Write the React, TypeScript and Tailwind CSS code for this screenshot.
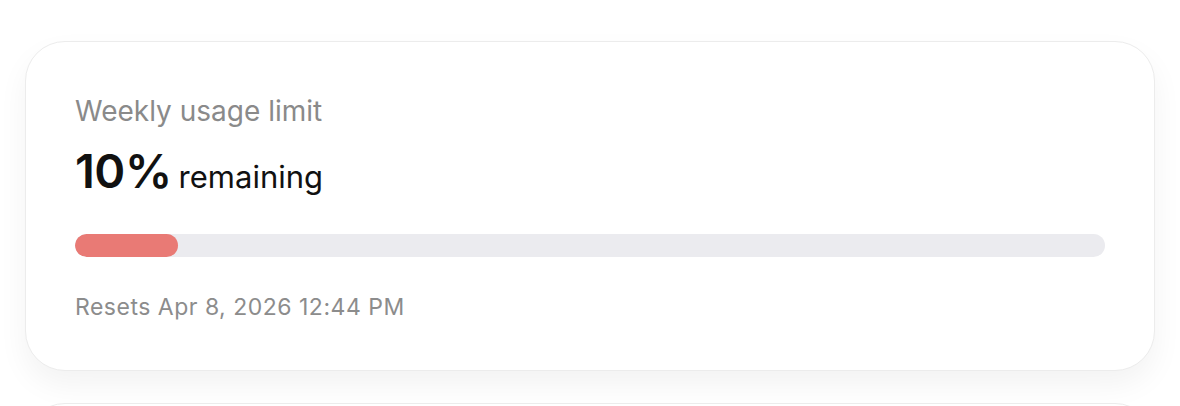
import React from "react";

export default function App() {
  const pct = 10;
  return (
    <div className="w-[1180px] h-[406px] overflow-hidden bg-white" style={{ fontFamily: "Inter, 'Noto Sans', sans-serif" }}>
      <div className="pt-[41px] px-[25px] flex flex-col gap-[32px]">
        <div className="w-[1130px] h-[330px] rounded-[40px] border border-[#ececec] bg-white shadow-[0_14px_30px_rgba(0,0,0,0.05)] px-[49px] pt-[52px]">
          <div className="text-[28px] leading-[34px] text-[#8a8a8a]">Weekly usage limit</div>
          <div className="mt-[15px] h-[56px] flex items-baseline gap-[7px] text-[#111111]">
            <span className="text-[47px] leading-[56px] font-semibold tracking-[-0.5px]">{pct}%</span>
            <span className="text-[31px] leading-[38px]">remaining</span>
          </div>
          <div className="mt-[35px] h-[23px] w-full rounded-full bg-[#ebebef] overflow-hidden">
            <div className="h-full rounded-full bg-[#e97a75]" style={{ width: `${pct}%` }} />
          </div>
          <div className="mt-[36px] text-[23px] leading-[28px] text-[#8c8c8c] tracking-[0.5px]">Resets Apr 8, 2026 12:44 PM</div>
        </div>
        <div className="w-[1130px] h-[200px] rounded-[40px] border border-[#ececec] bg-white" />
      </div>
    </div>
  );
}
